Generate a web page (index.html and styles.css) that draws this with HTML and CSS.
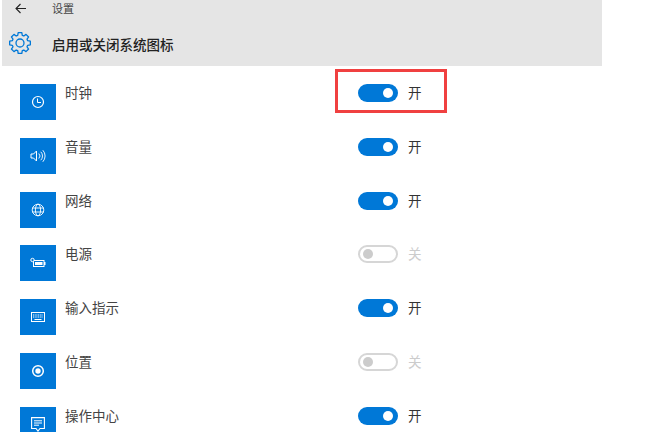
FILE: index.html
```html
<!DOCTYPE html>
<html lang="zh-CN">
<head>
    <meta charset="UTF-8">
    <title>设置</title>
    <link rel="stylesheet" href="styles.css">
</head>
<body>
    <div class="settings-header">
        <div class="top-bar">
            <svg class="back-icon" width="11" height="11" viewBox="0 0 11 11"><path d="M5.500 1 1 5.500 5.500 10M1 5.500H11" fill="none" stroke="#222" stroke-width="1.100"/></svg>
            <span class="app-title">设置</span>
        </div>
        <div class="title-bar">
            <svg class="gear-icon" width="24" height="24" viewBox="0 0 24 24"><path d="M10.180 1.660H13.820L14.270 4.330 15.820 4.970 18.020 3.400 20.600 5.980 19.030 8.180 19.670 9.730 22.340 10.180V13.820L19.670 14.270 19.030 15.820 20.600 18.020 18.020 20.600 15.820 19.030 14.270 19.670 13.820 22.340H10.180L9.730 19.670 8.180 19.030 5.980 20.600 3.400 18.020 4.970 15.820 4.330 14.270 1.660 13.820V10.180L4.330 9.730 4.970 8.180 3.400 5.980 5.980 3.400 8.180 4.970 9.730 4.330Z" fill="none" stroke="#0078d7" stroke-width="1.300" stroke-linejoin="round"/><circle cx="12" cy="12" r="4" fill="none" stroke="#0078d7" stroke-width="1.300"/></svg>
            <span class="page-title">启用或关闭系统图标</span>
        </div>
    </div>

    <div class="icon-list">
        <div class="icon-row">
            <div class="tile"><svg width="14" height="14" viewBox="0 0 14 14"><circle cx="7" cy="7" r="5.500" fill="none" stroke="#fff" stroke-width="1.200"/><path d="M6.500 3.500V7.500H10" fill="none" stroke="#fff"/></svg></div>
            <span class="row-name">时钟</span>
            <div class="switch on"><span class="knob"></span></div>
            <span class="state">开</span>
        </div>
        <div class="icon-row">
            <div class="tile"><svg width="16" height="14" viewBox="0 0 16 14"><path d="M1 5h2.500L6.500 2v10L3.500 9H1z" fill="none" stroke="#fff"/><path d="M8.800 4.500a3.500 3.500 0 0 1 0 5M10.800 2.800a6 6 0 0 1 0 8.400M12.800 1.200a8.500 8.500 0 0 1 0 11.600" fill="none" stroke="#fff" stroke-width=".9"/></svg></div>
            <span class="row-name">音量</span>
            <div class="switch on"><span class="knob"></span></div>
            <span class="state">开</span>
        </div>
        <div class="icon-row">
            <div class="tile"><svg width="14" height="14" viewBox="0 0 14 14"><g fill="none" stroke="#fff" stroke-width=".9"><circle cx="7" cy="7" r="5.800"/><ellipse cx="7" cy="7" rx="2.600" ry="5.800"/><path d="M1.200 5H12.800M1.200 9H12.800"/></g></svg></div>
            <span class="row-name">网络</span>
            <div class="switch on"><span class="knob"></span></div>
            <span class="state">开</span>
        </div>
        <div class="icon-row">
            <div class="tile"><svg width="16" height="12" viewBox="0 0 16 12"><rect x="3.500" y="3.500" width="10.500" height="6" fill="none" stroke="#fff"/><rect x="5" y="5" width="7.500" height="3" fill="#fff"/><rect x="14" y="5" width="1.500" height="3" fill="#fff"/><circle cx="2.500" cy="3" r="1.700" fill="#0078d7" stroke="#fff"/></svg></div>
            <span class="row-name">电源</span>
            <div class="switch off"><span class="knob"></span></div>
            <span class="state muted">关</span>
        </div>
        <div class="icon-row">
            <div class="tile"><svg width="14" height="10" viewBox="0 0 14 10"><rect x=".5" y=".5" width="13" height="9" fill="none" stroke="#fff"/><path d="M2 3H12M2 5H12" stroke="#fff" stroke-dasharray="1 .7"/><path d="M3.500 7.500H10.500" stroke="#fff"/></svg></div>
            <span class="row-name">输入指示</span>
            <div class="switch on"><span class="knob"></span></div>
            <span class="state">开</span>
        </div>
        <div class="icon-row">
            <div class="tile"><svg width="14" height="14" viewBox="0 0 14 14"><circle cx="7" cy="7" r="5.300" fill="none" stroke="#fff" stroke-width="1.500"/><circle cx="7" cy="7" r="2.700" fill="#fff"/></svg></div>
            <span class="row-name">位置</span>
            <div class="switch off"><span class="knob"></span></div>
            <span class="state muted">关</span>
        </div>
        <div class="icon-row">
            <div class="tile"><svg width="14" height="16" viewBox="0 0 14 16"><path d="M.6.600H13.400V11.500H9L7 14 5 11.500H.6z" fill="none" stroke="#fff" stroke-width="1.100"/><path d="M3 3.800H11M3 6H11M3 8.200H8" stroke="#fff"/></svg></div>
            <span class="row-name">操作中心</span>
            <div class="switch on"><span class="knob"></span></div>
            <span class="state">开</span>
        </div>
    </div>

    <div class="highlight-box"></div>
</body>
</html>
```

FILE: styles.css
```css
html, body {
    height: 432px;
    overflow: hidden;
}

body {
    font-family: "Noto Sans CJK SC", "Liberation Sans", sans-serif;
    margin: 0;
    padding: 0;
    background-color: #fff;
    color: #333;
    position: relative;
}

.settings-header {
    width: 600px;
    height: 66px;
    margin-left: 2px;
    background-color: #e5e5e5;
}

.top-bar {
    display: flex;
    align-items: center;
    height: 16px;
    padding-left: 13px;
}

.back-icon {
    margin-right: 26px;
}

.app-title {
    font-size: 11px;
    line-height: 16px;
    color: #444;
}

.title-bar {
    display: flex;
    align-items: center;
    height: 26px;
    margin-top: 15px;
    padding-left: 6px;
}

.gear-icon {
    margin-right: 20px;
    margin-bottom: 2px;
}

.page-title {
    font-size: 13.5px;
    font-weight: 500;
    line-height: 26px;
    color: #222;
}

.icon-list {
    height: 348px;
    overflow: hidden;
    padding: 18px 0 0 20px;
}

.icon-row {
    display: flex;
    align-items: flex-start;
    height: 53.8px;
}

.tile {
    width: 36px;
    height: 36px;
    flex: none;
    display: flex;
    align-items: center;
    justify-content: center;
    background-color: #0078d7;
}

.row-name {
    width: 293px;
    margin-top: -1px;
    margin-left: 9px;
    font-size: 13.5px;
    line-height: 18px;
    color: #444;
}

.switch {
    width: 40px;
    height: 18px;
    box-sizing: border-box;
    flex: none;
    border-radius: 9px;
    display: flex;
    align-items: center;
    padding: 0 5px;
}

.switch.on {
    background-color: #0078d7;
    justify-content: flex-end;
}

.switch.off {
    border: 2px solid #d6d6d6;
    padding: 0 3px;
}

.knob {
    width: 10px;
    height: 10px;
    border-radius: 50%;
    background-color: #fff;
}

.switch.off .knob {
    background-color: #ccc;
}

.state {
    margin-top: -1px;
    margin-left: 10px;
    font-size: 13.5px;
    line-height: 18px;
    color: #333;
}

.state.muted {
    color: #ccc;
}

.highlight-box {
    position: absolute;
    left: 335px;
    top: 69px;
    width: 106px;
    height: 38px;
    border: 3px solid #f04040;
}
```
